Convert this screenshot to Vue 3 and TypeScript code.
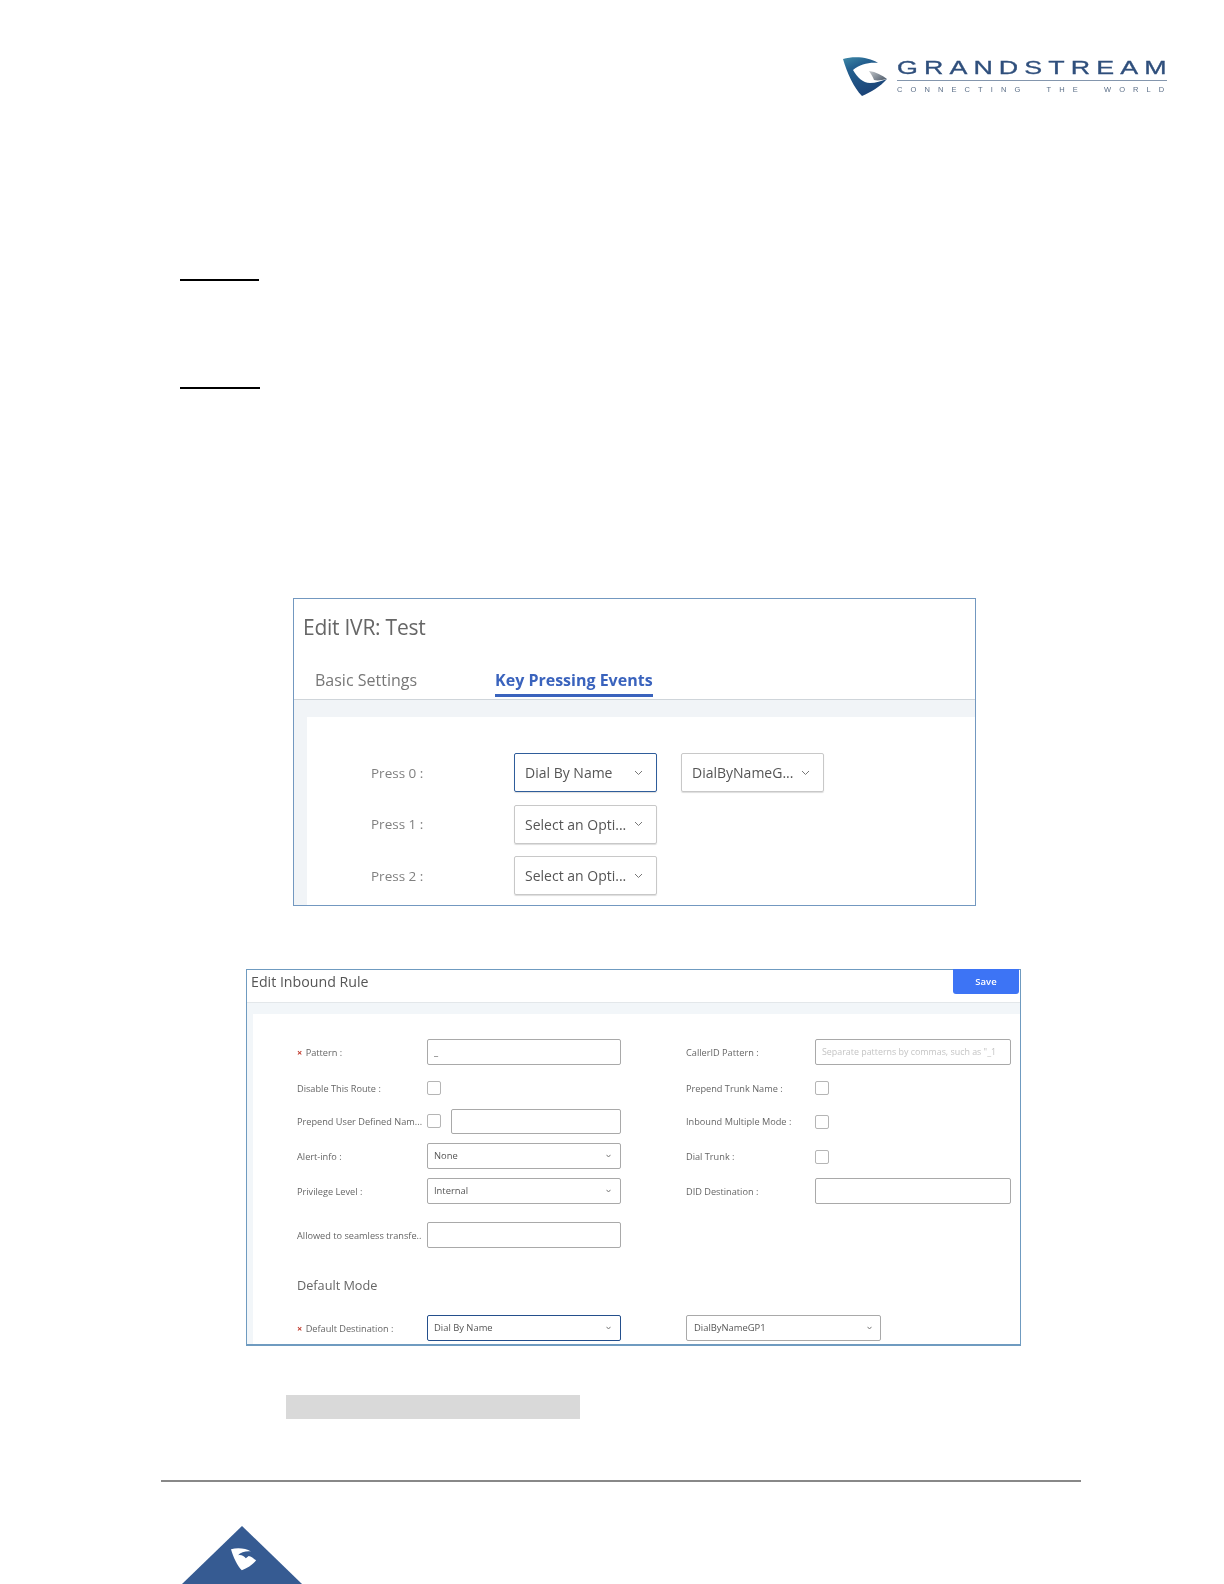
<script setup lang="ts">
const markPath =
  'M0 2C11 -1 26 0 35 6C27 5 17 7 10 13C14 20 20 26 27 26C33 26 38 24 44 22C37 30 28 35 19 39C11 31 4 16 0 2Z'
const wedgePath = 'M26 14C33 15 39 18 44 22C39 23 35 24 31 23C30 20 28 17 26 14Z'
const footPath =
  'M0 2C11 -1 26 0 35 6C27 5 17 7 12 13C18 11 23 15 26 18L31 14C35 15 40 18 44 22C37 30 28 35 19 39C11 31 4 16 0 2Z'
</script>

<template>
  <div class="page">
    <header class="logo">
      <svg class="mark" width="44" height="40" viewBox="0 0 44 40">
        <defs>
          <linearGradient id="gsBlue" x1="0" y1="0" x2="0.5" y2="1">
            <stop offset="0" stop-color="#3f8aa8" />
            <stop offset="0.3" stop-color="#24608f" />
            <stop offset="1" stop-color="#1b4377" />
          </linearGradient>
          <linearGradient id="gsGrey" x1="0" y1="0" x2="1" y2="0.6">
            <stop offset="0" stop-color="#c4c8cc" />
            <stop offset="1" stop-color="#596573" />
          </linearGradient>
        </defs>
        <path :d="markPath" fill="url(#gsBlue)" />
        <path :d="wedgePath" fill="url(#gsGrey)" />
      </svg>
      <div class="wordmark">
        <div class="brand">GRANDSTREAM</div>
        <div class="brand-rule"></div>
        <div class="tagline">CONNECTING THE WORLD</div>
      </div>
    </header>

    <div class="link-rule first"></div>
    <div class="link-rule second"></div>

    <section class="ivr shot">
      <div class="ivr-title">Edit IVR: Test</div>
      <div class="tabs">
        <div class="tab">Basic Settings</div>
        <div class="tab active">Key Pressing Events</div>
      </div>
      <div class="ivr-body">
        <div class="ivr-card">
          <div class="ivr-row">
            <div class="ivr-label">Press 0 :</div>
            <div class="ivr-select focus">
              <span>Dial By Name</span>
              <svg width="9" height="6" viewBox="0 0 9 6"><path d="M1 1l3.5 3.5L8 1" /></svg>
            </div>
            <div class="ivr-select extra">
              <span>DialByNameG...</span>
              <svg width="9" height="6" viewBox="0 0 9 6"><path d="M1 1l3.5 3.5L8 1" /></svg>
            </div>
          </div>
          <div class="ivr-row">
            <div class="ivr-label">Press 1 :</div>
            <div class="ivr-select">
              <span>Select an Opti...</span>
              <svg width="9" height="6" viewBox="0 0 9 6"><path d="M1 1l3.5 3.5L8 1" /></svg>
            </div>
          </div>
          <div class="ivr-row">
            <div class="ivr-label">Press 2 :</div>
            <div class="ivr-select">
              <span>Select an Opti...</span>
              <svg width="9" height="6" viewBox="0 0 9 6"><path d="M1 1l3.5 3.5L8 1" /></svg>
            </div>
          </div>
        </div>
      </div>
    </section>

    <section class="inbound shot">
      <div class="in-head">
        <div class="in-title">Edit Inbound Rule</div>
        <div class="save">Save</div>
      </div>
      <div class="in-body">
        <div class="in-card">
          <div class="f-row">
            <div class="f-label"><span class="req">×</span> Pattern :</div>
            <div class="field">_</div>
            <div class="f-label col2">CallerID Pattern :</div>
            <div class="field ph">Separate patterns by commas, such as "_1</div>
          </div>
          <div class="f-row m10">
            <div class="f-label">Disable This Route :</div>
            <div class="check"></div>
            <div class="f-label col2">Prepend Trunk Name :</div>
            <div class="check"></div>
          </div>
          <div class="f-row m7">
            <div class="f-label">Prepend User Defined Nam...</div>
            <div class="pair">
              <div class="check"></div>
              <div class="field grow"></div>
            </div>
            <div class="f-label col2">Inbound Multiple Mode :</div>
            <div class="check low"></div>
          </div>
          <div class="f-row m9">
            <div class="f-label">Alert-info :</div>
            <div class="field sel">
              <span>None</span>
              <svg width="5" height="4" viewBox="0 0 5 4"><path d="M.5 .8L2.5 3L4.500 .8" /></svg>
            </div>
            <div class="f-label col2">Dial Trunk :</div>
            <div class="check low"></div>
          </div>
          <div class="f-row m9">
            <div class="f-label">Privilege Level :</div>
            <div class="field sel">
              <span>Internal</span>
              <svg width="5" height="4" viewBox="0 0 5 4"><path d="M.5 .8L2.5 3L4.500 .8" /></svg>
            </div>
            <div class="f-label col2">DID Destination :</div>
            <div class="field"></div>
          </div>
          <div class="f-row m18">
            <div class="f-label">Allowed to seamless transfe..</div>
            <div class="field"></div>
          </div>
          <div class="mode">Default Mode</div>
          <div class="f-row m20">
            <div class="f-label"><span class="req">×</span> Default Destination :</div>
            <div class="field sel focus">
              <span>Dial By Name</span>
              <svg width="5" height="4" viewBox="0 0 5 4"><path d="M.5 .8L2.5 3L4.500 .8" /></svg>
            </div>
            <div class="field sel wide">
              <span>DialByNameGP1</span>
              <svg width="5" height="4" viewBox="0 0 5 4"><path d="M.5 .8L2.5 3L4.500 .8" /></svg>
            </div>
          </div>
        </div>
      </div>
    </section>

    <div class="grey-bar"></div>
    <div class="foot-rule"></div>
    <svg class="foot-mark" width="120" height="58" viewBox="0 0 120 58">
      <polygon points="60,0 120,58 0,58" fill="#365b92" />
      <g transform="translate(49 22) scale(0.57)">
        <path :d="footPath" fill="#fff" />
      </g>
    </svg>
  </div>
</template>

<style scoped>
.page {
  position: relative;
  width: 1224px;
  height: 1584px;
  overflow: hidden;
  background: #fff;
  display: flex;
  flex-direction: column;
  font-family: "Open Sans", "Noto Sans", sans-serif;
}
.logo {
  display: flex;
  gap: 10px;
  margin: 57px 0 0 843px;
  height: 40px;
  filter: blur(0.4px);
}
.mark {
  flex: none;
}
.wordmark {
  width: 270px;
  font-family: "Liberation Sans", sans-serif;
  color: #2f4f7c;
}
.brand {
  font-size: 18.5px;
  line-height: 21px;
  letter-spacing: 4.2px;
  white-space: nowrap;
  transform: scaleX(1.45);
  transform-origin: left center;
  -webkit-text-stroke: 0.3px #2f4f7c;
}
.brand-rule {
  height: 1px;
  background: #8496ad;
  margin-top: 2px;
}
.tagline {
  font-size: 7.5px;
  line-height: 8px;
  margin-top: 5px;
  letter-spacing: 8.1px;
  word-spacing: 8px;
  white-space: nowrap;
  color: #5c6f88;
}
.link-rule {
  background: #000;
  margin-left: 180px;
  height: 2px;
}
.link-rule.first {
  width: 79px;
  margin-top: 182px;
}
.link-rule.second {
  width: 80px;
  margin-top: 106px;
}
.shot {
  box-sizing: border-box;
  display: flex;
  flex-direction: column;
  filter: blur(0.4px);
}
.ivr {
  width: 683px;
  height: 308px;
  margin: 209px 0 0 293px;
  border: 1px solid #7398c0;
}
.ivr-title {
  margin: 13px 0 0 9px;
  font-size: 21px;
  letter-spacing: -0.25px;
  line-height: 30px;
  color: #666;
}
.tabs {
  display: flex;
  gap: 78px;
  padding-left: 21px;
  margin-top: 26px;
  height: 32px;
  box-sizing: border-box;
  flex: none;
  border-bottom: 1px solid #cfd5da;
  align-items: flex-start;
  font-size: 16px;
  line-height: 24px;
  color: #777;
}
.tab {
  height: 29px;
  box-sizing: border-box;
}
.tab.active {
  color: #3a63bd;
  font-weight: 700;
  border-bottom: 3px solid #3a63bd;
}
.ivr-body {
  flex: 1;
  min-height: 0;
  background: #f1f4f7;
  padding: 17px 0 0 13px;
  display: flex;
}
.ivr-card {
  flex: 1;
  background: #fff;
  padding: 36px 0 0 64px;
}
.ivr-row {
  display: flex;
  align-items: center;
  height: 39px;
  margin-bottom: 12.5px;
}
.ivr-label {
  width: 143px;
  font-size: 13.5px;
  color: #808080;
}
.ivr-select {
  box-sizing: border-box;
  width: 143px;
  height: 39px;
  border: 1px solid #c8c8c8;
  border-radius: 2px;
  box-shadow: 0 1px 1px #ddd;
  padding: 0 13px 0 10px;
  display: flex;
  align-items: center;
  justify-content: space-between;
  font-size: 14px;
  color: #555;
  white-space: nowrap;
}
.ivr-select.focus {
  border-color: #2f5d9b;
}
.ivr-select.extra {
  margin-left: 24px;
}
.ivr-select svg,
.sel svg {
  flex: none;
  fill: none;
  stroke: #777;
  stroke-width: 1;
}
.inbound {
  width: 775px;
  height: 377px;
  margin: 63px 0 0 246px;
  border: 1px solid #6f9bc0;
  border-bottom-width: 2px;
}
.in-head {
  height: 33px;
  box-sizing: border-box;
  flex: none;
  display: flex;
  justify-content: space-between;
  align-items: flex-start;
  border-bottom: 1px solid #e3e7ea;
}
.in-title {
  margin: 0 0 0 4px;
  font-size: 14.2px;
  line-height: 24px;
  color: #555;
}
.save {
  width: 66px;
  height: 25px;
  margin: -1px 1px 0 0;
  border-radius: 0 0 3px 3px;
  background: #3d74f5;
  color: #fff;
  font-size: 9.5px;
  font-weight: 600;
  line-height: 25px;
  text-align: center;
}
.in-body {
  flex: 1;
  min-height: 0;
  background: #f2f6f9;
  padding: 11px 0 0 6px;
  display: flex;
}
.in-card {
  flex: 1;
  background: #fff;
  padding: 25px 0 0 44px;
}
.f-row {
  display: grid;
  grid-template-columns: 130px 194px 194px 196px;
  align-items: center;
  height: 26px;
}
.m7 {
  margin-top: 7px;
}
.m9 {
  margin-top: 9px;
}
.m10 {
  margin-top: 10px;
}
.m18 {
  margin-top: 18px;
}
.m20 {
  margin-top: 20px;
}
.f-label {
  font-size: 9.2px;
  color: #666;
  white-space: nowrap;
}
.f-label.col2 {
  margin-left: 65px;
}
.req {
  color: #c0392b;
  font-weight: 700;
  margin-right: 1px;
}
.field {
  box-sizing: border-box;
  height: 26px;
  border: 1px solid #a9a9a9;
  border-radius: 2px;
  padding: 0 6px;
  font-size: 9.4px;
  line-height: 24px;
  color: #555;
  white-space: nowrap;
}
.field.ph {
  color: #c4c4c4;
  font-size: 8.9px;
}
.sel {
  display: flex;
  align-items: center;
  justify-content: space-between;
  padding-right: 9px;
}
.sel.focus {
  border-color: #244f8c;
}
.sel.wide {
  width: 195px;
  margin-left: 65px;
  padding: 0 8px 0 7px;
}
.check {
  box-sizing: border-box;
  width: 14px;
  height: 14px;
  border: 1px solid #b5b5b5;
  border-radius: 2px;
}
.check.low {
  margin-top: 2px;
}
.pair {
  display: flex;
  align-items: center;
  gap: 10px;
}
.field.grow {
  flex: 1;
  height: 25px;
}
.mode {
  margin-top: 27px;
  font-size: 12.7px;
  line-height: 20px;
  color: #666;
}
.grey-bar {
  width: 294px;
  height: 24px;
  margin: 49px 0 0 286px;
  background: #d9d9d9;
}
.foot-rule {
  width: 920px;
  height: 2px;
  margin: 61px 0 0 161px;
  background: #888;
}
.foot-mark {
  flex: none;
  margin: 44px 0 0 182px;
}
</style>
